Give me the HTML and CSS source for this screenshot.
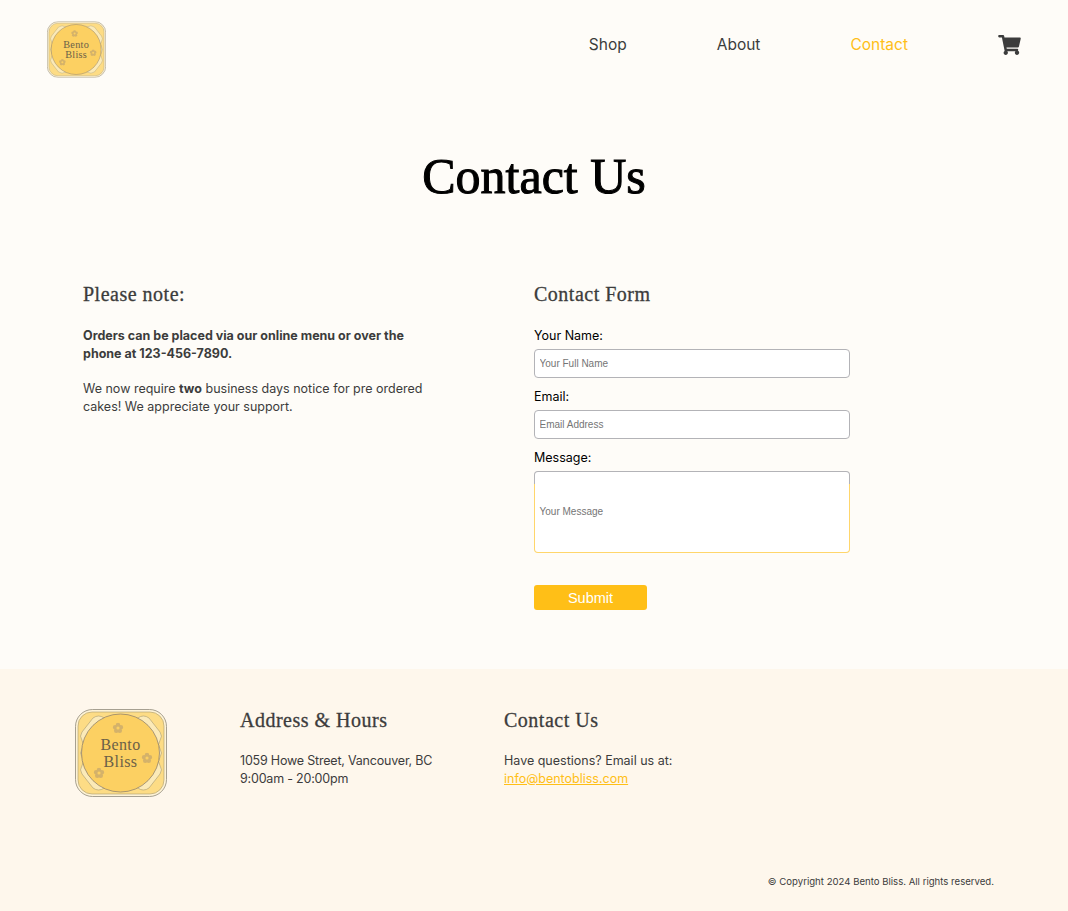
FILE: index.html
```html
<!DOCTYPE html>
<html lang="en">
<head>
    <meta charset="UTF-8">
    <meta name="viewport" content="width=device-width, initial-scale=1.0">
    <title>Contact Us - Bento Bliss</title>
    <link rel="stylesheet" href="styles.css">
</head>
<body>
    <svg class="sprite" width="0" height="0" aria-hidden="true">
        <symbol id="flower" viewBox="0 0 12 12">
            <circle cx="6" cy="2.9" r="2.5"/>
            <circle cx="9.1" cy="5.1" r="2.5"/>
            <circle cx="7.9" cy="8.9" r="2.5"/>
            <circle cx="4.1" cy="8.9" r="2.5"/>
            <circle cx="2.9" cy="5.1" r="2.5"/>
            <circle cx="6" cy="6" r="1.7" fill="#fcd062"/>
        </symbol>
        <symbol id="logo-art" viewBox="0 0 92 88">
            <rect x="0.5" y="0.5" width="91" height="87" rx="17" fill="#fef3d6" stroke="#8f8a7c" stroke-width="0.8"/>
            <rect x="3" y="3" width="86" height="82" rx="14" fill="#fddc85" stroke="#a89a70" stroke-width="0.6"/>
            <path class="doily" d="M18 9 q5.6 -4 11.2 0 t11.2 0 t11.2 0 t11.2 0 t11.2 0 L85 23 q3 4.2 0 8.4 t0 8.4 t0 8.4 t0 8.4 t0 8.4 L74 79 q-5.6 4 -11.2 0 t-11.2 0 t-11.2 0 t-11.2 0 t-11.2 0 L7 65 q-3 -4.2 0 -8.4 t0 -8.4 t0 -8.4 t0 -8.4 t0 -8.4 Z"/>
            <circle cx="45.5" cy="44" r="39" fill="#fcd062" stroke="#85786a" stroke-width="0.7"/>
            <use href="#flower" x="37.5" y="13.5" width="11" height="11" class="petals"/>
            <use href="#flower" x="66.5" y="43.5" width="11" height="11" class="petals"/>
            <use href="#flower" x="18.5" y="58.5" width="11" height="11" class="petals"/>
        </symbol>
    </svg>

    <header class="site-header">
        <a href="#" class="logo-link">
            <svg class="logo-small" viewBox="0 0 92 88">
                <use href="#logo-art" width="92" height="88"/>
                <text x="45.5" y="41" class="logo-text">Bento</text>
                <text x="45.5" y="57.5" class="logo-text">Bliss</text>
            </svg>
        </a>
        <nav class="main-nav">
            <a href="#">Shop</a>
            <a href="#">About</a>
            <a href="#" class="active">Contact</a>
            <a href="#" class="cart" aria-label="Cart">
                <svg viewBox="0 0 576 512" width="23" height="20"><path fill="#3c3c3c" d="M528.12 301.319l47.273-208C578.806 78.301 567.391 64 551.99 64H159.208l-9.166-44.81C147.758 8.021 137.93 0 126.529 0H24C10.745 0 0 10.745 0 24v16c0 13.255 10.745 24 24 24h69.883l70.248 343.435C147.325 417.1 136 435.222 136 456c0 30.928 25.072 56 56 56s56-25.072 56-56c0-15.674-6.447-29.835-16.824-40h209.647C430.447 426.165 424 440.326 424 456c0 30.928 25.072 56 56 56s56-25.072 56-56c0-22.172-12.888-41.332-31.579-50.405l5.517-24.276c3.413-15.018-8.002-29.319-23.403-29.319H218.117l-6.545-32h293.145c11.206 0 20.92-7.754 23.403-18.681z"/></svg>
            </a>
        </nav>
    </header>

    <main>
        <h1>Contact Us</h1>
        <div class="columns">
            <section class="note">
                <h2>Please note:</h2>
                <p><strong>Orders can be placed via our online menu or over the phone at 123-456-7890.</strong></p>
                <p>We now require <strong>two</strong> business days notice for pre ordered cakes! We appreciate your support.</p>
            </section>
            <section class="contact-form">
                <h2>Contact Form</h2>
                <form>
                    <label for="name">Your Name:</label>
                    <input type="text" id="name" placeholder="Your Full Name">
                    <label for="email">Email:</label>
                    <input type="text" id="email" placeholder="Email Address">
                    <label for="message">Message:</label>
                    <textarea id="message" placeholder="Your Message"></textarea>
                    <button type="button">Submit</button>
                </form>
            </section>
        </div>
    </main>

    <footer class="site-footer">
        <div class="footer-top">
            <svg class="logo-big" viewBox="0 0 92 88">
                <use href="#logo-art" width="92" height="88"/>
                <text x="45.5" y="41" class="logo-text">Bento</text>
                <text x="45.5" y="57.5" class="logo-text">Bliss</text>
            </svg>
            <div class="footer-address">
                <h3>Address &amp; Hours</h3>
                <p>1059 Howe Street, Vancouver, BC<br>9:00am - 20:00pm</p>
            </div>
            <div class="footer-contact">
                <h3>Contact Us</h3>
                <p>Have questions? Email us at:<br><a href="#">info@bentobliss.com</a></p>
            </div>
        </div>
        <p class="copyright">© Copyright 2024 Bento Bliss. All rights reserved.</p>
    </footer>
</body>
</html>
```

FILE: styles.css
```css
* {
    box-sizing: border-box;
}

body {
    font-family: 'Inter', 'Liberation Sans', sans-serif;
    font-size: 12.5px;
    line-height: 18px;
    color: #3c3c3c;
    margin: 0;
    background-color: #fefcf8;
}

h1, h2, h3 {
    font-family: 'Liberation Serif', serif;
    margin: 0;
}

.sprite {
    position: absolute;
}

/* Logo */
.doily {
    fill: #fbeab8;
    stroke: #a89a70;
    stroke-width: 0.6;
}

.petals {
    fill: #d4b26a;
}

.logo-text {
    font-family: 'Liberation Serif', serif;
    font-size: 16px;
    letter-spacing: 0.4px;
    fill: #6b6148;
    text-anchor: middle;
}

.logo-small {
    display: block;
    width: 59px;
    height: 57px;
}

.logo-big {
    display: block;
    width: 92px;
    height: 88px;
}

/* Header */
.site-header {
    display: flex;
    justify-content: space-between;
    align-items: flex-start;
    padding: 21px 47px 0;
    height: 90px;
}

.main-nav {
    display: flex;
    align-items: center;
    gap: 90px;
    height: 48px;
}

.main-nav a {
    color: #3c3c3c;
    font-size: 15.5px;
    text-decoration: none;
}

.main-nav a.active {
    color: #ffbf17;
}

.main-nav .cart {
    display: flex;
}

/* Main */
h1 {
    color: #000;
    font-size: 50px;
    line-height: 60px;
    font-weight: normal;
    -webkit-text-stroke: 1px #000;
    text-align: center;
    margin-top: 56px;
}

.columns {
    display: flex;
    padding: 76px 0 59px 83px;
}

.note {
    width: 451px;
}

.note p {
    width: 345px;
    margin: 0 0 17px;
}

h2 {
    font-size: 20px;
    line-height: 24px;
    font-weight: normal;
    letter-spacing: 0.5px;
    -webkit-text-stroke: 0.3px #3c3c3c;
    color: #3c3c3c;
    margin-bottom: 21px;
}

strong {
    font-weight: 700;
}

/* Form */
form {
    display: flex;
    flex-direction: column;
    align-items: flex-start;
    width: 316px;
}

label {
    color: #000;
    margin-bottom: 3.5px;
}

input, textarea {
    display: block;
    width: 100%;
    font-family: 'Liberation Sans', sans-serif;
    font-size: 10px;
    background-color: #fff;
    border: 1px solid #b3b3b7;
    border-radius: 4px;
    padding: 0 4.5px;
    margin-bottom: 10px;
    outline: none;
}

input {
    height: 29.5px;
}

textarea {
    height: 82px;
    padding-top: 34px;
    resize: none;
    margin-bottom: 32px;
    /* top of the border is still grey, the rest has gone yellow */
    border-color: transparent;
    background: linear-gradient(#fff, #fff) padding-box,
                linear-gradient(#b3b3b7 13px, #ffd66b 13px) border-box;
}

::placeholder {
    color: #757575;
    opacity: 1;
}

button {
    width: 113px;
    height: 25px;
    font-family: 'Liberation Sans', sans-serif;
    font-size: 14.5px;
    color: #fff;
    background-color: #ffbf17;
    border: none;
    border-radius: 3px;
    padding: 1px 0 0;
    cursor: pointer;
}

/* Footer */
.site-footer {
    background-color: #fef7ec;
    height: 242px;
    padding: 40px 74px 0 75px;
}

.footer-top {
    display: flex;
    height: 160px;
}

.footer-address {
    margin-left: 73px;
    width: 264px;
    letter-spacing: -0.2px;
}

h3 {
    font-size: 20px;
    line-height: 24px;
    font-weight: normal;
    letter-spacing: 0.5px;
    -webkit-text-stroke: 0.3px #3c3c3c;
    color: #3c3c3c;
    margin: -1px 0 20px;
}

.site-footer p {
    margin: 0;
}

.site-footer a {
    color: #ffbf17;
}

.site-footer .copyright {
    font-size: 9.6px;
    text-align: right;
    margin-top: 4px;
}
```
